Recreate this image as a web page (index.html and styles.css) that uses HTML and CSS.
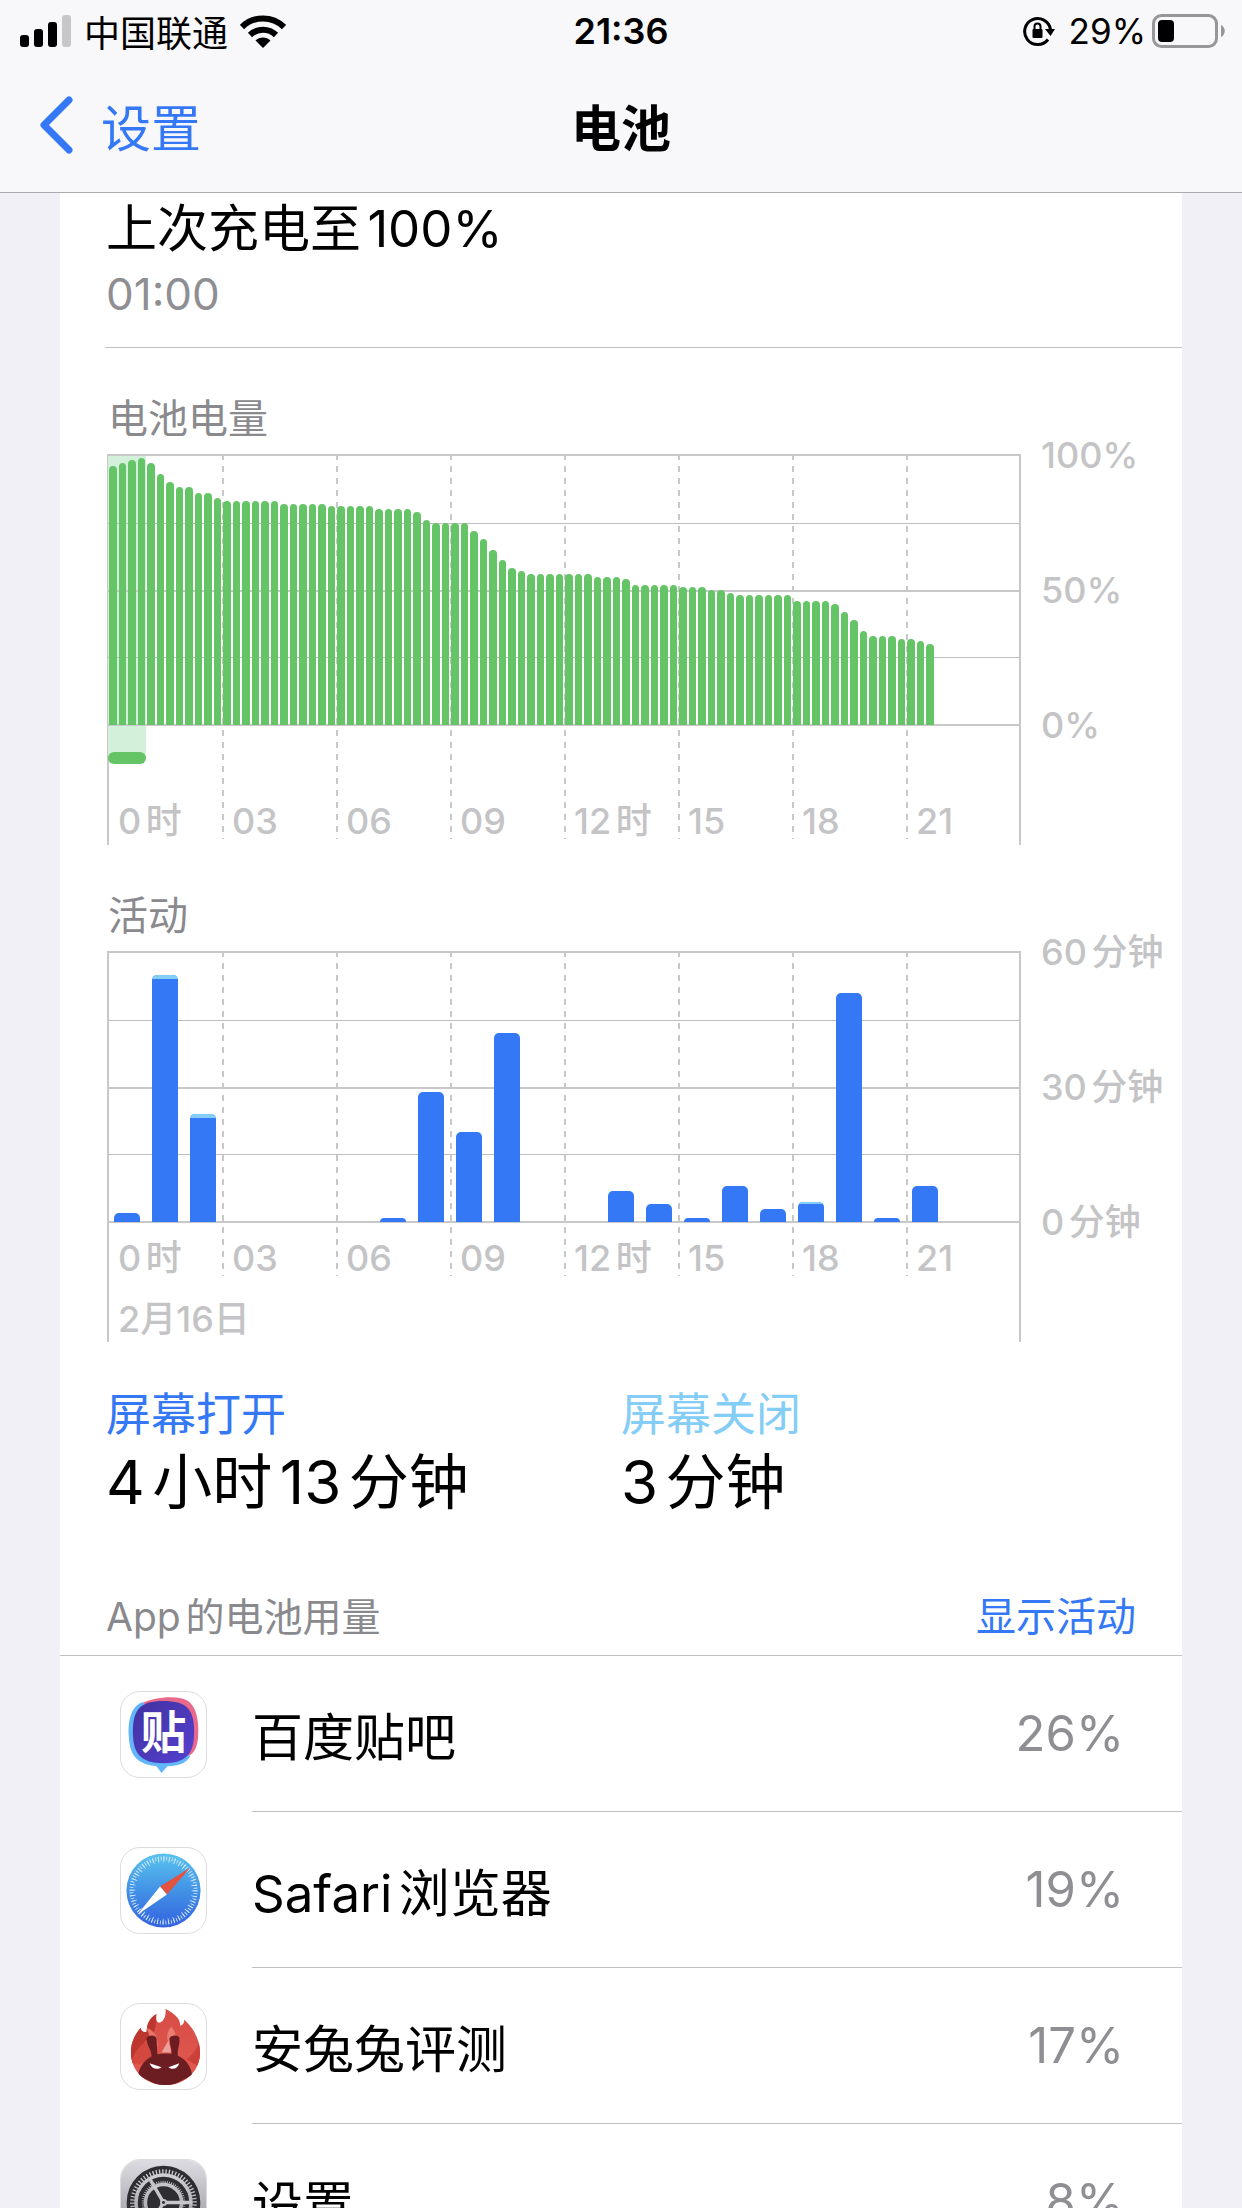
FILE: index.html
```html
<!DOCTYPE html>
<html lang="zh-CN">
<head>
  <meta charset="UTF-8">
  <meta name="viewport" content="width=device-width, initial-scale=1">
  <title>电池</title>
  <link rel="stylesheet" href="styles.css">
</head>
<body>

  <header class="header">
    <div class="status-bar">
      <div class="status-left">
        <svg class="signal" width="52" height="34" viewBox="0 0 52 34">
          <rect x="0" y="21" width="9" height="12" rx="3"/>
          <rect x="14" y="15" width="9" height="18" rx="3"/>
          <rect x="28" y="8" width="9" height="25" rx="3"/>
          <rect x="42" y="1" width="9" height="32" rx="3" fill="#c7c7c9"/>
        </svg>
        <span>中国联通</span>
        <svg class="wifi" width="46" height="34" viewBox="0 0 46 34">
          <path d="M23 34 L15.5 26.5 C19.5 22.5 26.5 22.5 30.500 26.500 Z"/>
          <path d="M10 21 A18.500 18.500 0 0 1 36 21" fill="none" stroke="#000" stroke-width="6"/>
          <path d="M2 13 A30 30 0 0 1 44 13" fill="none" stroke="#000" stroke-width="6"/>
        </svg>
      </div>
      <span class="clock">21:36</span>
      <div class="status-right">
        <svg class="lock" width="32" height="32" viewBox="0 0 32 32">
          <path d="M25 24.500 A13 13 0 1 1 27.500 14.500" fill="none" stroke="#000" stroke-width="3"/>
          <path d="M22 14 H32 L27.500 21 Z"/>
          <rect x="9.500" y="14" width="10" height="9" rx="1"/>
          <path d="M11.500 15 V11.500 a3 3 0 0 1 6 0 V15" fill="none" stroke="#000" stroke-width="2"/>
        </svg>
        <span>29%</span>
        <svg class="battery" width="74" height="34" viewBox="0 0 74 34">
          <rect x="1.500" y="1.500" width="63" height="31" rx="8" fill="none" stroke="#979799" stroke-width="3"/>
          <rect x="6" y="6" width="16" height="22" rx="4"/>
          <path d="M69 11 C74 13 74 21 69 23 Z" fill="#979799"/>
        </svg>
      </div>
    </div>
    <nav class="nav-bar">
      <a class="back" href="#">
        <svg width="34" height="58" viewBox="0 0 34 58">
          <path d="M30 4 L5 29 L30 54" fill="none" stroke="#3478f6" stroke-width="7" stroke-linecap="round" stroke-linejoin="round"/>
        </svg>
        <span>设置</span>
      </a>
      <h1>电池</h1>
    </nav>
  </header>

  <main class="card">
    <section class="last-charge">
      <h2>上次充电至100%</h2>
      <p>01:00</p>
    </section>

    <section class="chart-section">
      <h3>电池电量</h3>
      <div class="chart">
        <div class="plot">
          <div class="charging"></div>
          <div class="grid-lines"><i></i><i></i><i></i><i></i></div>
          <div class="hours hours-tall">
            <span>0时</span><span>03</span><span>06</span><span>09</span><span>12时</span><span>15</span><span>18</span><span>21</span>
          </div>
          <div class="bars level-bars" id="level-bars"></div>
        </div>
        <div class="scale"><span>100%</span><span>50%</span><span>0%</span></div>
      </div>
    </section>

    <section class="chart-section">
      <h3>活动</h3>
      <div class="chart">
        <div class="plot">
          <div class="grid-lines"><i></i><i></i><i></i><i></i></div>
          <div class="hours">
            <span>0时</span><span>03</span><span>06</span><span>09</span><span>12时</span><span>15</span><span>18</span><span>21</span>
          </div>
          <div class="bars activity-bars" id="activity-bars"></div>
          <span class="date">2月16日</span>
        </div>
        <div class="scale"><span>60分钟</span><span>30分钟</span><span>0分钟</span></div>
      </div>
    </section>

    <section class="screen-time">
      <div>
        <h3 class="screen-on">屏幕打开</h3>
        <p>4小时13分钟</p>
      </div>
      <div>
        <h3 class="screen-off">屏幕关闭</h3>
        <p>3分钟</p>
      </div>
    </section>

    <section>
      <div class="apps-header">
        <h3>App的电池用量</h3>
        <button type="button">显示活动</button>
      </div>
      <ul class="apps">
        <li>
          <svg class="app-icon" viewBox="0 0 86 86">
            <defs>
              <linearGradient id="tieba" x1="0" y1="0" x2="1" y2="1">
                <stop offset="0" stop-color="#4132a0"/>
                <stop offset="1" stop-color="#5540cf"/>
              </linearGradient>
            </defs>
            <path d="M20 12 C32 5 56 3 66 8 C78 14 79 34 78 46 C77 56 74 62 68 65 L30 40 Z" fill="#e8698c"/>
            <path d="M22 10 C8 15 7 34 8 46 C9 66 18 73 36 75 L41 82 L47 75 C58 75 66 72 70 65 L40 40 Z" fill="#62b6fb"/>
            <path d="M43 9 C66 9 74 17 74 40 C74 63 66 72 43 72 C20 72 12 63 12 40 C12 17 20 9 43 9 Z" fill="url(#tieba)"/>
            <text x="43" y="58" class="tieba-char">贴</text>
          </svg>
          <div class="app-row"><span>百度贴吧</span><span class="percent">26%</span></div>
        </li>
        <li>
          <svg class="app-icon" viewBox="0 0 86 86">
            <defs>
              <linearGradient id="safari" x1="0" y1="0" x2="0" y2="1">
                <stop offset="0" stop-color="#5ac4ee"/>
                <stop offset="0.5" stop-color="#4292e6"/>
                <stop offset="1" stop-color="#3462e0"/>
              </linearGradient>
            </defs>
            <circle cx="43" cy="43" r="37.500" fill="url(#safari)"/>
            <circle cx="43" cy="43" r="32.500" fill="none" stroke="#d5eafa" stroke-width="4" pathLength="144" stroke-dasharray="0.6 1.4"/>
            <circle cx="43" cy="43" r="31.500" fill="none" stroke="#d5eafa" stroke-width="6" pathLength="144" stroke-dasharray="0.6 3.400"/>
            <path d="M70 20 L39.500 39 L46.500 47 Z" fill="#e2523f"/>
            <path d="M16.500 67.500 L39.500 39 L46.500 47 Z" fill="#fff"/>
          </svg>
          <div class="app-row"><span>Safari浏览器</span><span class="percent">19%</span></div>
        </li>
        <li>
          <svg class="app-icon" viewBox="0 0 86 86">
            <defs>
              <linearGradient id="flame" x1="0" y1="0" x2="0" y2="1">
                <stop offset="0" stop-color="#d64c46"/>
                <stop offset="1" stop-color="#e35b50"/>
              </linearGradient>
              <clipPath id="flame-clip">
                <path d="M45 82 C24 82 10 67 10 49 C10 39 14 31 20 24 C20 27 22 29 26 28 C26 20 29 14 36 10 C35 15 36 18 38 19 C43 19 46 12 45 5 C53 9 60 14 60 22 C63 21 64 19 64 16 C74 25 80 37 80 49 C80 67 66 82 45 82 Z"/>
              </clipPath>
            </defs>
            <g clip-path="url(#flame-clip)">
              <rect width="86" height="86" fill="url(#flame)"/>
              <path d="M8 10 H36 C34 20 38 25 28 34 C20 42 18 50 20 60 L8 60 Z" fill="#bd362f"/>
              <path d="M10 60 C14 46 20 40 29 38 L34 60 Z" fill="#d2483f"/>
              <path d="M80 34 C78 46 72 52 66 56 L80 64 Z" fill="#cb4038"/>
              <path d="M26 24 C35 28 38 34 37 44 L30 36 Z" fill="#e8766b"/>
              <path d="M51 23 C46 28 46 34 48 40 L55 36 C56 30 54 27 51 23 Z" fill="#ea7c72"/>
              <path d="M48 37 L41 49 H51 Z" fill="#eda19b"/>
              <path d="M17 72 C20 58 30 50 45 50 C60 50 70 58 72 72 L45 86 Z" fill="#6c1d22"/>
              <path d="M26 34 C29 31 35 31 36 35 L37 54 L31 54 C31 45 25 41 26 34 Z" fill="#6c1d22"/>
              <path d="M49 35 C50 31 58 31 59 34 C60 42 56 46 58 54 L51 53 C52 45 49 41 49 35 Z" fill="#6c1d22"/>
            </g>
            <path d="M29 60 L41 64 C37 67 31 66 29 60 Z M59 60 L48 64 C52 67 57 66 59 60 Z" fill="#fff"/>
          </svg>
          <div class="app-row"><span>安兔兔评测</span><span class="percent">17%</span></div>
        </li>
        <li>
          <svg class="app-icon" viewBox="0 0 86 86">
            <defs>
              <linearGradient id="settings" x1="0" y1="0" x2="0" y2="1">
                <stop offset="0" stop-color="#dcdce2"/>
                <stop offset="1" stop-color="#8c8c92"/>
              </linearGradient>
            </defs>
            <rect width="86" height="86" fill="url(#settings)"/>
            <g fill="none" stroke="#2e2e32">
              <circle cx="43" cy="43" r="35.500" stroke-width="3.500"/>
              <circle cx="43" cy="43" r="32" stroke-width="5" pathLength="120" stroke-dasharray="1.2 0.8"/>
              <circle cx="43" cy="43" r="24" stroke-width="4"/>
              <circle cx="43" cy="43" r="21.500" stroke-width="3" pathLength="120" stroke-dasharray="1.2 0.8"/>
            </g>
            <circle cx="43" cy="43" r="16.500" fill="#2e2e32"/>
            <path d="M43 43 H72 M43 43 L28.500 18 M43 43 L28.500 68" stroke="#c6c6cb" stroke-width="3.500"/>
            <circle cx="43" cy="43" r="3.500" fill="#c6c6cb"/>
            <circle cx="43" cy="43" r="1.500" fill="#2e2e32"/>
          </svg>
          <div class="app-row"><span>设置</span><span class="percent">8%</span></div>
        </li>
      </ul>
    </section>
  </main>

  <script>
    // battery level, one value per 15 minutes
    const levels = [
      96, 97, 98, 99, 97, 93, 90, 88, 88, 86, 86, 84,
      83, 83, 83, 83, 83, 83, 82, 82, 82, 82, 82, 81,
      81, 81, 81, 81, 80, 80, 80, 80, 79, 76, 75, 75,
      75, 75, 72, 69, 65, 61, 58, 57, 56, 56, 56, 56,
      56, 56, 56, 55, 55, 55, 54, 52, 52, 52, 52, 52,
      51, 51, 51, 50, 50, 49, 48, 48, 48, 48, 48, 48,
      46, 46, 46, 46, 45, 42, 39, 35, 33, 33, 33, 32,
      32, 31, 30
    ];

    // minutes of screen on / screen off, one entry per hour
    const activity = [
      [2, 0], [54, 1], [23, 1], [0, 0], [0, 0], [0, 0], [0, 0], [1, 0],
      [29, 0], [20, 0], [42, 0], [0, 0], [0, 0], [7, 0], [4, 0], [1, 0],
      [8, 0], [3, 0], [4, 0.4], [51, 0], [1, 0], [8, 0]
    ];

    const levelBars = document.getElementById('level-bars');
    const activityBars = document.getElementById('activity-bars');

    levels.forEach(level => {
      const bar = document.createElement('div');
      bar.style.height = `${level}%`;
      levelBars.appendChild(bar);
    });

    activity.forEach(([on, off]) => {
      const bar = document.createElement('div');
      const total = on + off;
      bar.style.height = `${total / 60 * 100}%`;
      if (off > 0) {
        const cap = document.createElement('b');
        cap.style.height = `${off / total * 100}%`;
        bar.appendChild(cap);
      }
      activityBars.appendChild(bar);
    });
  </script>

</body>
</html>
```
FILE: styles.css
```css
* {
  box-sizing: border-box;
}

body {
  margin: 0;
  height: 100vh;
  overflow: hidden;
  display: flex;
  flex-direction: column;
  background: #f1f0f6;
  color: #000;
  font-family: Inter, "Noto Sans CJK SC", sans-serif;
  text-autospace: normal;
}

h1, h2, h3, p, ul {
  margin: 0;
  padding: 0;
  font-weight: 400;
}

svg {
  display: block;
  flex: none;
}

/* header */
.header {
  flex: none;
  background: #f8f8fa;
  border-bottom: 1px solid #acacae;
}

.status-bar {
  display: grid;
  grid-template-columns: 1fr auto 1fr;
  align-items: center;
  height: 62px;
  padding: 0 16px;
  font-size: 36px;
}

.status-left,
.status-right {
  display: flex;
  align-items: center;
}

.status-left {
  gap: 12px;
  padding-left: 4px;
}

.status-right {
  justify-content: flex-end;
  gap: 6px;
  font-size: 35px;
}

.status-right .lock {
  margin-right: 8px;
}

.clock {
  font-weight: 600;
}

.nav-bar {
  display: grid;
  grid-template-columns: 1fr auto 1fr;
  align-items: center;
  height: 130px;
  padding: 0 39px 5px;
  font-size: 50px;
}

.back {
  display: flex;
  align-items: center;
  gap: 28px;
  color: #3478f6;
  text-decoration: none;
}

.nav-bar h1 {
  font-size: 50px;
  font-weight: 600;
}

/* content */
.card {
  flex: 1;
  min-height: 0;
  overflow: hidden;
  margin: 0 60px;
  background: #fff;
}

.last-charge {
  margin-left: 45px;
  padding: 3px 0 21px 1px;
  border-bottom: 1px solid #c0c0c2;
}

.last-charge h2 {
  font-size: 51px;
  line-height: 66px;
}

.last-charge p {
  color: #8e8e93;
  font-size: 44px;
  line-height: 64px;
}

/* charts */
.chart-section {
  padding: 44px 0 0 47px;
}

.chart-section h3 {
  margin-bottom: 8px;
  padding-left: 1px;
  color: #8a8a8e;
  font-size: 40px;
  line-height: 54px;
}

.chart {
  display: grid;
  grid-template-columns: 1fr 161px;
  color: #c4c4c6;
  font-size: 36px;
  font-weight: 500;
  line-height: 36px;
}

.plot {
  display: grid;
  height: 391px;
  padding: 0 1px;
  background:
    linear-gradient(#c8c8ca, #c8c8ca) left / 2px 100% no-repeat,
    linear-gradient(#c8c8ca, #c8c8ca) right / 2px 100% no-repeat;
}

.plot > * {
  grid-area: 1 / 1;
  align-self: start;
}

.grid-lines {
  display: grid;
  grid-template-rows: repeat(4, 1fr);
  height: 272px;
  border: solid #c8c8ca;
  border-width: 2px 0;
}

.grid-lines i + i {
  border-top: 1px solid #bebec0;
}

.grid-lines i:nth-child(3) {
  border-top: 2px solid #c8c8ca;
}

.hours {
  display: grid;
  grid-template-columns: repeat(8, 1fr);
  align-items: end;
  height: 325px;
}

.hours-tall {
  height: 385px;
}

.hours span {
  display: flex;
  align-items: flex-end;
  height: 100%;
  padding-left: 10px;
}

.hours span + span {
  background: repeating-linear-gradient(#c8c8ca 0 6px, transparent 6px 12px) left / 2px 100% no-repeat;
}

.bars {
  display: grid;
  align-items: end;
  height: 271px;
  padding-top: 1px;
}

.level-bars {
  grid-template-columns: repeat(96, 1fr);
}

.level-bars div {
  margin: 0 1px;
  background: #65c466;
  border-radius: 4px 4px 0 0;
}

.activity-bars {
  grid-template-columns: repeat(24, 1fr);
}

.activity-bars div {
  margin: 0 6px;
  overflow: hidden;
  background: #3478f6;
  border-radius: 5px 5px 0 0;
}

.activity-bars b {
  display: block;
  background: #84cdf6;
}

.charging {
  display: flex;
  align-items: flex-end;
  width: 38px;
  height: 310px;
  background: linear-gradient(#d3f0da, #d3f0da) top / 100% 304px no-repeat;
}

.charging::after {
  content: "";
  flex: 1;
  height: 12px;
  background: #65c466;
  border-radius: 6px;
}

.plot .date {
  align-self: end;
  padding-left: 10px;
  line-height: 46px;
  text-autospace: no-autospace;
}

.scale {
  display: flex;
  flex-direction: column;
  justify-content: space-between;
  height: 306px;
  margin-top: -17px;
  padding-left: 20px;
  white-space: nowrap;
}

/* screen on / off */
.screen-time {
  display: grid;
  grid-template-columns: 1fr 1fr;
  padding: 43px 46px 0;
}

.screen-time h3 {
  font-size: 45px;
  line-height: 60px;
}

.screen-time p {
  font-size: 60px;
  line-height: 74px;
}

.screen-on {
  color: #3478f6;
}

.screen-off {
  color: #84cdf6;
}

/* app list */
.apps-header {
  display: flex;
  justify-content: space-between;
  padding: 71px 46px 11px;
  border-bottom: 1px solid #c0c0c2;
  line-height: 54px;
}

.apps-header h3 {
  color: #8a8a8e;
  font-size: 39px;
}

.apps-header button {
  padding: 0;
  border: 0;
  background: none;
  color: #3478f6;
  font: inherit;
  font-size: 40px;
}

.apps {
  list-style: none;
}

.apps li {
  display: flex;
  align-items: center;
  padding-left: 60px;
}

.app-icon {
  width: 87px;
  height: 87px;
  border: 1px solid #dcdcde;
  border-radius: 20px;
}

.app-row {
  flex: 1;
  display: flex;
  align-items: center;
  justify-content: space-between;
  height: 156px;
  margin-left: 45px;
  padding-right: 58px;
  border-bottom: 1px solid #c0c0c2;
  font-size: 51px;
}

.percent {
  color: #8e8e93;
  font-size: 49px;
}

.tieba-char {
  fill: #fff;
  font-size: 46px;
  font-weight: 700;
  text-anchor: middle;
}
```
